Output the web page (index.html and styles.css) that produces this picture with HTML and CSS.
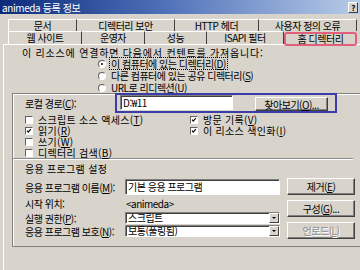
FILE: index.html
```html
<!DOCTYPE html>
<html lang="ko">
<head>
    <meta charset="UTF-8">
    <meta name="viewport" content="width=device-width, initial-scale=1.0">
    <title>animeda 등록 정보</title>
    <link rel="stylesheet" href="styles.css">
</head>
<body>

<div class="dialog">
    <div class="titlebar">
        <span class="title">animeda 등록 정보</span>
        <span class="help">?</span>
    </div>

    <div class="tabs">
        <div class="tab-row">
            <div class="tab first w69">문서</div>
            <div class="tab w98">디렉터리 보안</div>
            <div class="tab w84">HTTP 헤더</div>
            <div class="tab w98">사용자 정의 오류</div>
        </div>
        <div class="tab-row row2">
            <div class="tab first w74">웹 사이트</div>
            <div class="tab w63">운영자</div>
            <div class="tab w62">성능</div>
            <div class="tab w77">ISAPI 필터</div>
            <div class="tab active w73">홈 디렉터리</div>
        </div>
    </div>

    <div class="page">
        <p class="intro">이 리소스에 연결하면 다음에서 컨텐트를 가져옵니다:</p>

        <div class="radios">
            <div class="radio-item"><span class="radio on"></span><span class="focus">이 컴퓨터에 있는 디렉터리(<u>D</u>)</span></div>
            <div class="radio-item"><span class="radio"></span><span>다른 컴퓨터에 있는 공유 디렉터리(<u>S</u>)</span></div>
            <div class="radio-item"><span class="radio"></span><span>URL로 리디렉션(<u>U</u>)</span></div>
        </div>

        <div class="frame">
            <div class="path-row">
                <span class="path-label">로컬 경로(<u>C</u>):</span>
                <div class="highlight">
                    <div class="field path-field">D:₩11</div>
                    <button class="btn browse">찾아보기(<u>O</u>)...</button>
                </div>
            </div>

            <div class="checks">
                <div class="check-col left">
                    <div class="check-item"><span class="box"></span><span>스크립트 소스 액세스(<u>T</u>)</span></div>
                    <div class="check-item"><span class="box"><svg viewBox="0 0 8 8"><polyline points="1.5,3.5 3,5.5 6.5,1.5" /></svg></span><span>읽기(<u>R</u>)</span></div>
                    <div class="check-item"><span class="box"></span><span>쓰기(<u>W</u>)</span></div>
                    <div class="check-item"><span class="box"></span><span>디렉터리 검색(<u>B</u>)</span></div>
                </div>
                <div class="check-col">
                    <div class="check-item"><span class="box"><svg viewBox="0 0 8 8"><polyline points="1.5,3.5 3,5.5 6.5,1.5" /></svg></span><span>방문 기록(<u>V</u>)</span></div>
                    <div class="check-item"><span class="box"><svg viewBox="0 0 8 8"><polyline points="1.5,3.5 3,5.5 6.5,1.5" /></svg></span><span>이 리소스 색인화(<u>I</u>)</span></div>
                </div>
            </div>

            <div class="sep"></div>
            <div class="section">응용 프로그램 설정</div>

            <div class="app">
                <div class="app-grid">
                    <span class="label">응용 프로그램 이름(<u>M</u>):</span>
                    <div class="field">기본 응용 프로그램</div>

                    <span class="label">시작 위치:</span>
                    <span class="value">&lt;animeda&gt;</span>

                    <span class="label">실행 권한(<u>P</u>):</span>
                    <div class="select"><span class="sel-text">스크립트</span><span class="arrow"></span></div>

                    <span class="label">응용 프로그램 보호(<u>N</u>):</span>
                    <div class="select"><span class="sel-text">보통(풀링됨)</span><span class="arrow"></span></div>
                </div>
                <div class="app-buttons">
                    <button class="btn">제거(<u>E</u>)</button>
                    <button class="btn">구성(<u>G</u>)...</button>
                    <button class="btn disabled">언로드(<u>L</u>)</button>
                </div>
            </div>
        </div>
    </div>
</div>

</body>
</html>
```

FILE: styles.css
```css
body {
    margin: 0;
    width: 360px;
    height: 270px;
    overflow: hidden;
    background: #d8d4cc;
    font-family: "Noto Sans CJK KR", "DejaVu Sans", sans-serif;
    font-size: 10px;
    line-height: 11px;
    letter-spacing: -0.5px;
    color: #000;
}
u {
    text-decoration: underline;
}

/* title bar */
.titlebar {
    height: 14px;
    display: flex;
    align-items: center;
    justify-content: space-between;
    padding: 0 2px;
    background: linear-gradient(to right, #0c2a7a, #4e70b8 45%, #b8cce8);
    color: #fff;
}
.title {
    font-size: 10px;
    letter-spacing: -0.4px;
}
.help {
    width: 8px;
    height: 9px;
    border: 1px solid;
    border-color: #fff #404040 #404040 #fff;
    background: #d8d4cc;
    color: #000;
    font-weight: bold;
    font-size: 8px;
    line-height: 9px;
    text-align: center;
}

/* tabs */
.tabs {
    margin-top: 5px;
    padding-left: 8px;
}
.tab-row {
    display: flex;
    height: 12px;
}
.tab-row.row2 {
    height: 13px;
}
.tab {
    box-sizing: border-box;
    border-top: 1px solid #fff;
    border-right: 1px solid #404040;
    text-align: center;
    line-height: 11px;
}
.tab.first {
    border-left: 1px solid #fff;
}
.tab.active {
    height: 14px;
    margin-top: 1px;
    border: 2px solid #e0607c;
    border-radius: 3px;
    line-height: 10px;
}
.w62 { width: 62px; }
.w63 { width: 63px; }
.w69 { width: 69px; }
.w73 { width: 73px; }
.w74 { width: 74px; }
.w77 { width: 77px; }
.w84 { width: 84px; }
.w98 { width: 98px; }

/* page */
.page {
    margin-left: 3px;
    border-left: 1px solid #fff;
    border-top: 1px solid #fff;
    padding-top: 2px;
    height: 230px;
}
.intro {
    margin: 0;
    padding-left: 18px;
    letter-spacing: 0.8px;
}
.radios {
    padding-left: 94px;
    display: flex;
    flex-direction: column;
    gap: 1px;
}
.radio-item {
    display: flex;
    align-items: center;
    gap: 5px;
    height: 11px;
}
.radio {
    box-sizing: border-box;
    width: 8px;
    height: 8px;
    border-radius: 50%;
    border: 1px solid;
    border-color: #606060 #fff #fff #606060;
    background: #fff;
    display: flex;
    align-items: center;
    justify-content: center;
}
.radio.on::after {
    content: "";
    width: 2px;
    height: 2px;
    border-radius: 50%;
    background: #000;
}
.focus {
    outline: 1px dotted #000;
    padding: 0 1px;
    margin-left: -1px;
}

/* frame */
.frame {
    margin: 0 -4px 0 8px;
    border: 1px solid #808080;
    box-shadow: inset 1px 1px 0 #fff;
    padding: 0 8px 7px 12px;
}
.path-row {
    display: flex;
    align-items: flex-start;
    margin-bottom: 1px;
}
.path-label {
    width: 90px;
    margin-top: 4px;
}
.highlight {
    display: flex;
    align-items: flex-start;
    gap: 22px;
    margin-top: -1px;
    padding: 0 7px 0 3px;
    border: 2px solid #3a3ca8;
}
.field {
    box-sizing: border-box;
    height: 15px;
    background: #fff;
    border: 1px solid;
    border-color: #808080 #fff #fff #808080;
    box-shadow: inset 1px 1px 0 #404040;
    padding-left: 2px;
    line-height: 13px;
}
.path-field {
    width: 113px;
}
.btn {
    box-sizing: border-box;
    height: 17px;
    padding: 0;
    background: #d8d4cc;
    border: 1px solid;
    border-color: #fff #404040 #404040 #fff;
    box-shadow: inset -1px -1px 0 #808080;
    font: inherit;
    letter-spacing: inherit;
    color: #000;
    text-align: center;
}
.btn.browse {
    width: 73px;
    height: 14px;
    margin-top: 2px;
    line-height: 11px;
}
.btn.disabled {
    color: #8a8a8a;
    text-shadow: 1px 1px 0 #fff;
}

.checks {
    display: flex;
    letter-spacing: 0.3px;
}
.check-col.left {
    width: 165px;
}
.check-item {
    display: flex;
    align-items: center;
    gap: 5px;
    height: 11px;
}
.box {
    box-sizing: border-box;
    width: 8px;
    height: 8px;
    background: #fff;
    border: 1px solid;
    border-color: #606060 #fff #fff #606060;
    display: flex;
}
.box svg {
    width: 6px;
    height: 6px;
    fill: none;
    stroke: #000;
    stroke-width: 1.6;
}

.sep {
    margin: 0 2px 0 -12px;
    border-top: 1px solid #8a8a8a;
    border-bottom: 1px solid #fff;
}
.section {
    margin-top: 3px;
    letter-spacing: 0.3px;
}

/* application settings */
.app {
    display: flex;
    gap: 7px;
    margin-top: 4px;
}
.app-grid {
    display: grid;
    grid-template-columns: 100px 155px;
    grid-template-rows: 16px 17px 13px 13px;
    margin-top: 1px;
    align-items: center;
}
.app-grid .field {
    height: 16px;
}
.label {
    white-space: nowrap;
}
.value {
    padding-left: 1px;
}
.select {
    box-sizing: border-box;
    height: 12px;
    align-self: start;
    display: flex;
    background: #fff;
    border: 1px solid;
    border-color: #808080 #fff #fff #808080;
    box-shadow: inset 1px 1px 0 #404040;
    line-height: 10px;
}
.sel-text {
    flex: 1;
    padding-left: 2px;
}
.arrow {
    box-sizing: border-box;
    width: 10px;
    background: #d8d4cc;
    border: 1px solid;
    border-color: #fff #404040 #404040 #fff;
    display: flex;
    align-items: center;
    justify-content: center;
}
.arrow::after {
    content: "";
    border-left: 2px solid transparent;
    border-right: 2px solid transparent;
    border-top: 2px solid #000;
}
.app-buttons {
    width: 68px;
    display: flex;
    flex-direction: column;
    gap: 5px;
}
```
